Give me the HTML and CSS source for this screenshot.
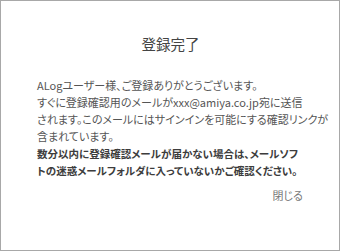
FILE: index.html
```html
<!DOCTYPE HTML>
<html lang="ja">
<head>
	<meta charset="UTF-8">
	<title>登録完了</title>
	<link rel="stylesheet" href="styles.css">
</head>
<body>

<!-- ****************************** DIALOG ****************************** -->
<div class="dialog">
	<h1 class="title">登録完了</h1>
	<div class="message">
		<p>ALogユーザー様、ご登録ありがとうございます。<br>
		すぐに登録確認用のメールがxxx@amiya.co.jp宛に送信<br>
		されます。このメールにはサインインを可能にする確認リンクが<br>
		含まれています。</p>
		<p class="notice">数分以内に登録確認メールが届かない場合は、メールソフ<br>
		トの迷惑メールフォルダに入っていないかご確認ください。</p>
	</div>
	<div class="actions">
		<button class="close">閉じる</button>
	</div>
</div>

</body>
</html>
```

FILE: styles.css
```css
	html, body { margin: 0; padding: 0; background-color: white; }
	body { font-family: "Noto Sans CJK JP", "Noto Sans", sans-serif; }
	.dialog { box-sizing: border-box; width: 340px; height: 251px; border: 1px solid #a8a8a8; padding: 33px 35px 0 36px; }
	.title { margin: 0; text-align: center; font-size: 14.5px; line-height: 20px; font-weight: normal; color: #444; font-feature-settings: "palt"; }
	.message { margin-top: 23px; font-size: 11px; line-height: 17px; color: #555; white-space: nowrap; font-feature-settings: "palt"; }
	.message p { margin: 0; }
	.notice { font-size: 10.5px; font-weight: bold; color: #3c3c3c; }
	.actions { display: flex; justify-content: flex-end; margin-top: 8px; padding-right: 1px; }
	.close { border: 0; background-color: transparent; padding: 0; cursor: pointer; font-family: inherit; font-size: 11px; line-height: 17px; color: #777; font-feature-settings: "palt"; }
```
